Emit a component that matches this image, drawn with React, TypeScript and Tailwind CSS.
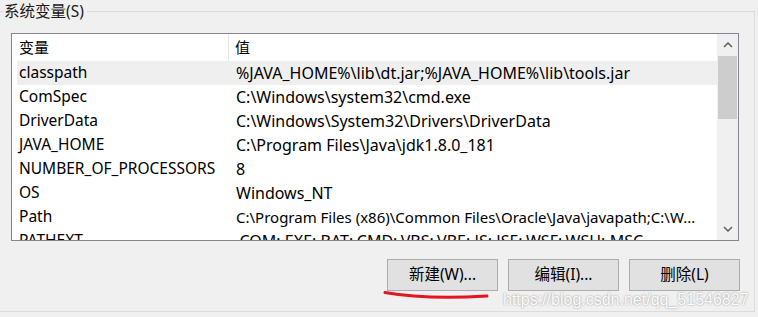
import React from "react";

const rows: [string, string][] = [
  ["classpath", "%JAVA_HOME%\\lib\\dt.jar;%JAVA_HOME%\\lib\\tools.jar"],
  ["ComSpec", "C:\\Windows\\system32\\cmd.exe"],
  ["DriverData", "C:\\Windows\\System32\\Drivers\\DriverData"],
  ["JAVA_HOME", "C:\\Program Files\\Java\\jdk1.8.0_181"],
  ["NUMBER_OF_PROCESSORS", "8"],
  ["OS", "Windows_NT"],
  ["Path", "C:\\Program Files (x86)\\Common Files\\Oracle\\Java\\javapath;C:\\W..."],
  ["PATHEXT", ".COM;.EXE;.BAT;.CMD;.VBS;.VBE;.JS;.JSE;.WSF;.WSH;.MSC"],
];

const font = {
  fontFamily: '"Segoe UI", "Noto Sans", "Noto Sans CJK SC", sans-serif',
};

function WinButton({ label }: { label: string }) {
  return (
    <button className="w-[111px] h-[32px] bg-[#e1e1e1] border border-[#adadad] text-[15.5px] text-black leading-none">
      {label}
    </button>
  );
}

export default function App() {
  return (
    <div
      className="relative w-[758px] h-[317px] bg-[#f0f0f0] overflow-hidden text-[15px] text-black"
      style={font}
    >
      <div className="pt-[11px] pr-[3px]">
        {/* Group box */}
        <div className="relative w-[755px] h-[301px] border-t border-r border-b border-[#dcdcdc]">
          <span className="absolute left-[3px] -top-[10px] bg-[#f0f0f0] pl-[1px] pr-[3px] leading-[19px] text-[15.5px] text-[#1a1a1a]">
            系统变量(S)
          </span>

          <div className="pl-[11px] pt-[21px]">
            {/* List view */}
            <div className="w-[728px] h-[208px] border border-[#828790] bg-white flex">
              <div className="flex-1 overflow-hidden">
                <div className="flex h-[27px] items-center">
                  <div className="w-[217px] h-full pl-[7px] flex items-center border-r border-[#e5e5e5]">
                    变量
                  </div>
                  <div className="pl-[6px]">值</div>
                </div>
                {rows.map(([name, value], i) => (
                  <div
                    key={name}
                    className={
                      "ml-[5px] flex h-[24px] items-center whitespace-nowrap " +
                      (i === 0 ? "bg-[#efefef]" : "")
                    }
                  >
                    <div className="w-[212px] pl-[2px] shrink-0 text-[15.5px]">{name}</div>
                    <div
                      className={
                        "pl-[7px] pr-[4px] overflow-hidden " +
                        (name === "Path" ? "text-[15px]" : "text-[16px]")
                      }
                    >
                      {value}
                    </div>
                  </div>
                ))}
              </div>

              {/* Scrollbar */}
              <div className="w-[21px] bg-[#f0f0f0] flex flex-col items-center">
                <div className="h-[22px] w-full flex items-center justify-center">
                  <svg width="10" height="6" viewBox="0 0 10 6">
                    <path d="M1 5 L5 1 L9 5" fill="none" stroke="#606060" strokeWidth="1.5" />
                  </svg>
                </div>
                <div className="w-[19px] h-[63px] bg-[#cdcdcd]" />
                <div className="flex-1" />
                <div className="h-[22px] w-full flex items-center justify-center">
                  <svg width="10" height="6" viewBox="0 0 10 6">
                    <path d="M1 1 L5 5 L9 1" fill="none" stroke="#606060" strokeWidth="1.5" />
                  </svg>
                </div>
              </div>
            </div>

            {/* Buttons */}
            <div className="mt-[18px] flex justify-end gap-[10px] pr-[14px]">
              <WinButton label="新建(W)..." />
              <WinButton label="编辑(I)..." />
              <WinButton label="删除(L)" />
            </div>
          </div>
        </div>
      </div>

      {/* Red pen stroke under the first button */}
      <svg className="absolute left-0 top-0 pointer-events-none" width="758" height="317">
        <path
          d="M385 292.5 C 410 297, 445 298.5, 487 296"
          fill="none"
          stroke="#e3151f"
          strokeWidth="3"
          strokeLinecap="round"
        />
      </svg>

      {/* Watermark */}
      <span
        className="absolute left-[503px] top-[288px] text-[16px] text-[#fcfcfc] [text-shadow:0_0_2px_#8a8a8a]"
        style={{ fontFamily: '"Liberation Sans", Arial, sans-serif' }}
      >
        https://blog.csdn.net/qq_51546827
      </span>
    </div>
  );
}
